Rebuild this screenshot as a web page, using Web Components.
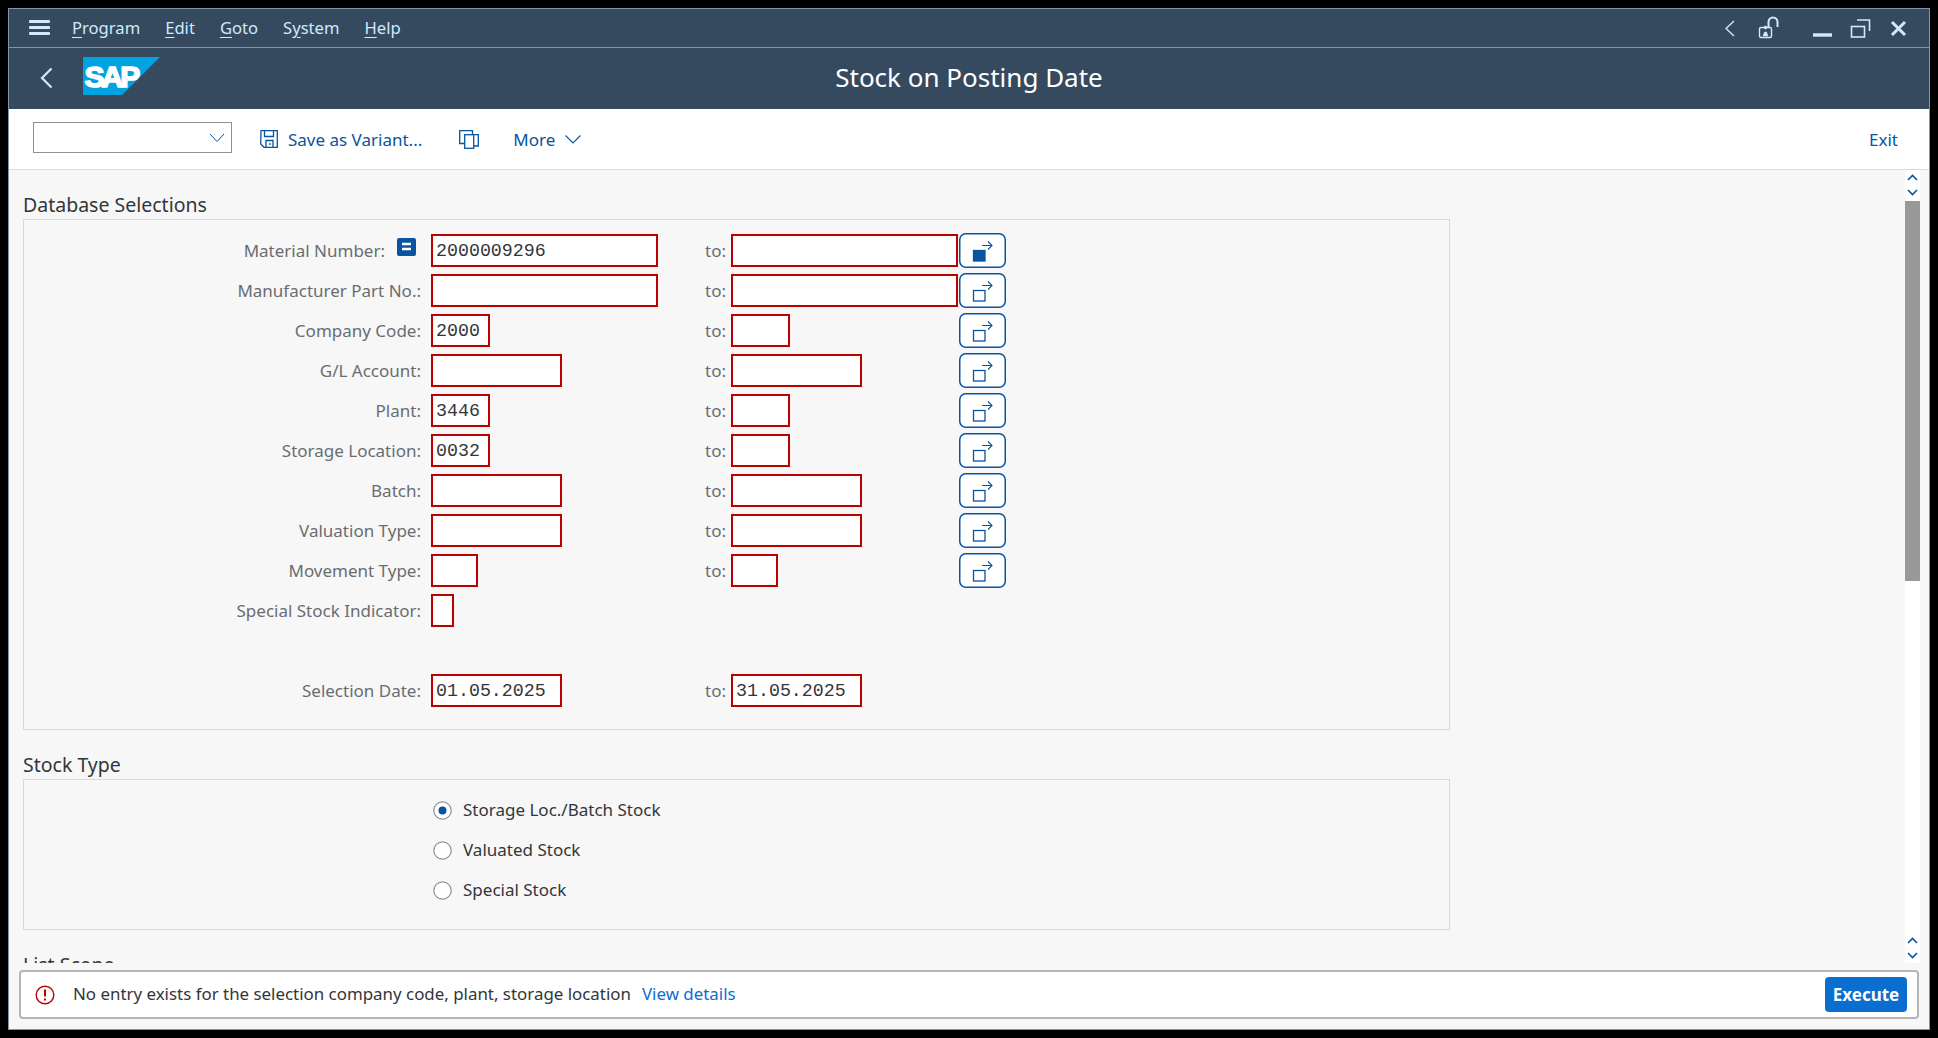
<!DOCTYPE html>
<html>
<head>
<meta charset="utf-8">
<title>Stock on Posting Date</title>
<style>
    html, body { margin: 0; height: 100%; background: #000; overflow: hidden; }
    body { font-family: "Noto Sans", "Liberation Sans", sans-serif; font-size: 17px; color: #32363a; }
</style>
</head>
<body>
<sap-window>
    <sap-menu-bar slot="head"></sap-menu-bar>
    <sap-title-bar slot="head" text="Stock on Posting Date"></sap-title-bar>
    <sap-tool-bar slot="head"></sap-tool-bar>

    <sap-group text="Database Selections">
        <sap-select-row label="Material Number:" marker value="2000009296" len="18" to-len="18" filled></sap-select-row>
        <sap-select-row label="Manufacturer Part No.:" len="18" to-len="18"></sap-select-row>
        <sap-select-row label="Company Code:" value="2000" len="4" to-len="4"></sap-select-row>
        <sap-select-row label="G/L Account:" len="10" to-len="10"></sap-select-row>
        <sap-select-row label="Plant:" value="3446" len="4" to-len="4"></sap-select-row>
        <sap-select-row label="Storage Location:" value="0032" len="4" to-len="4"></sap-select-row>
        <sap-select-row label="Batch:" len="10" to-len="10"></sap-select-row>
        <sap-select-row label="Valuation Type:" len="10" to-len="10"></sap-select-row>
        <sap-select-row label="Movement Type:" len="3" to-len="3"></sap-select-row>
        <sap-select-row label="Special Stock Indicator:" len="1" single></sap-select-row>
        <sap-select-row blank></sap-select-row>
        <sap-select-row label="Selection Date:" value="01.05.2025" to-value="31.05.2025" len="10" to-len="10" no-more></sap-select-row>
    </sap-group>

    <sap-group text="Stock Type">
        <sap-radio checked>Storage Loc./Batch Stock</sap-radio>
        <sap-radio>Valuated Stock</sap-radio>
        <sap-radio>Special Stock</sap-radio>
    </sap-group>

    <sap-group text="List Scope"></sap-group>

    <sap-message-bar slot="foot" text="No entry exists for the selection company code, plant, storage location"></sap-message-bar>
</sap-window>

<script>
const BLUE = '#0854a0';

class SapWindow extends HTMLElement {
    constructor() {
        super();
        this.attachShadow({ mode: 'open' }).innerHTML = `
        <style>
            :host { display: flex; flex-direction: column; box-sizing: border-box; margin: 8px; height: 1022px;
                    background: #f7f7f7; border: 1px solid #7f96ad; }
            #main { flex: 1; min-height: 0; display: flex; }
            #scroll { flex: 1; min-width: 0; overflow: hidden; padding: 23px 455px 0 14px; }
            sap-scroll-bar { margin-right: 9px; }
        </style>
        <slot name="head"></slot>
        <div id="main">
            <div id="scroll"><slot></slot></div>
            <sap-scroll-bar></sap-scroll-bar>
        </div>
        <slot name="foot"></slot>
        `;
    }
}
customElements.define('sap-window', SapWindow);

class SapMenuBar extends HTMLElement {
    constructor() {
        super();
        this.attachShadow({ mode: 'open' }).innerHTML = `
        <style>
            :host { display: flex; align-items: center; height: 38px; background: #354a5f; color: #d1e8ff;
                    border-bottom: 1px solid #7f96ad; font-size: 16.6px; }
            svg { display: block; flex: none; }
            #burger { margin-left: 20px; margin-right: 22px; }
            nav { display: flex; padding-bottom: 2px; }
            nav span { margin-right: 25px; }
            u { text-underline-offset: 3px; }
            #right { margin-left: auto; }
        </style>
        <svg id="burger" width="21" height="16" viewBox="0 0 21 16" fill="#d1e8ff">
            <rect x="0" y="0" width="21" height="3" rx="1"/><rect x="0" y="6" width="21" height="3" rx="1"/><rect x="0" y="12" width="21" height="3" rx="1"/>
        </svg>
        <nav>
            <span><u>P</u>rogram</span><span><u>E</u>dit</span><span><u>G</u>oto</span><span>S<u>y</u>stem</span><span><u>H</u>elp</span>
        </nav>
        <svg id="right" width="204" height="38" viewBox="1725 9 204 38" fill="none" stroke="#d1e8ff">
            <path d="M1734 21 L1726 28.5 L1734 36" stroke-width="1.4"/>
            <rect x="1759.5" y="27.5" width="12" height="10" rx="1.5" stroke-width="1.4"/>
            <path d="M1768.5 27 V22 a4.5 4.5 0 0 1 9 0 V27" stroke-width="2"/>
            <path d="M1765.5 29 a1.5 1.5 0 1 1 0.01 0 M1763 36 l1.5 -4 h2 l1.5 4 z" fill="#d1e8ff" stroke-width="0.6"/>
            <path d="M1813 35 H1832" stroke-width="3.4"/>
            <rect x="1851.5" y="26.5" width="13" height="10.5" stroke-width="1.6"/>
            <path d="M1857 20 H1869.5 V31" stroke-width="1.6"/>
            <path d="M1892 22 L1905 35 M1905 22 L1892 35" stroke-width="3"/>
        </svg>
        `;
    }
}
customElements.define('sap-menu-bar', SapMenuBar);

class SapTitleBar extends HTMLElement {
    constructor() {
        super();
        this.attachShadow({ mode: 'open' }).innerHTML = `
        <style>
            :host { display: block; position: relative; height: 61px; background: #354a5f; }
            #row { display: flex; align-items: center; height: 100%; }
            svg { display: block; flex: none; }
            #back { margin: 0 29px 2px 31px; }
            #logo { margin-bottom: 5px; }
            h1 { margin: 0; position: absolute; left: 0; right: 0; top: 0; line-height: 59px; text-align: center;
                 font-size: 26px; font-weight: 400; color: #fff; }
            text { font-family: "Liberation Sans", sans-serif; font-weight: 700; }
        </style>
        <div id="row">
            <svg id="back" width="14" height="22" viewBox="0 0 14 22" fill="none" stroke="#d1e8ff" stroke-width="2.2">
                <path d="M11.5 1.5 L2 11 L11.5 20.5"/>
            </svg>
            <svg id="logo" width="78" height="38" viewBox="0 0 78 38">
                <path d="M0 0 H77 L39 38 H0 Z" fill="#00a3e0"/>
                <text x="1.5" y="30" font-size="30" fill="#fff" stroke="#fff" stroke-width="1.6" letter-spacing="-3">SAP</text>
            </svg>
        </div>
        <h1>${this.getAttribute('text')}</h1>
        `;
    }
}
customElements.define('sap-title-bar', SapTitleBar);

class SapToolBar extends HTMLElement {
    constructor() {
        super();
        this.attachShadow({ mode: 'open' }).innerHTML = `
        <style>
            :host { display: flex; align-items: center; height: 60px; background: #fff; color: ${BLUE};
                    border-bottom: 1px solid #d9d9d9; padding: 0 31px 0 24px; }
            svg { display: block; flex: none; }
            #combo { width: 191px; height: 29px; border: 1px solid #89919a; background: #fff; display: flex; align-items: center;
                     justify-content: flex-end; padding-right: 6px; margin-bottom: 3px; }
            #save { margin-left: 28px; margin-right: 10px; }
            #copy { margin-left: 37px; margin-right: 34px; }
            #more { margin-left: 10px; }
            #exit { margin-left: auto; }
        </style>
        <div id="combo">
            <svg width="16" height="10" viewBox="0 0 16 10" fill="none" stroke="${BLUE}" stroke-width="1"><path d="M1 1 L8 8.5 L15 1"/></svg>
        </div>
        <svg id="save" width="18" height="18" viewBox="0 0 18 18" fill="none" stroke="${BLUE}" stroke-width="1.3">
            <path d="M1 .7 H17.3 V17.3 H4 L.7 14 Z"/><path d="M4.5 1 V6.5 H13.5 V1"/><path d="M6 17 V10.5 H13 V17 M10 13 V15"/>
        </svg>
        <span>Save as Variant...</span>
        <svg id="copy" width="20" height="19" viewBox="0 0 20 19" fill="none" stroke="${BLUE}" stroke-width="1.3">
            <path d="M5 13.5 H.7 V.7 H13.5 V4"/><rect x="5.7" y="4.7" width="9" height="13.6"/><path d="M15 4.7 H19.3 V16 H15"/>
        </svg>
        <span>More</span>
        <svg id="more" width="16" height="9" viewBox="0 0 16 9" fill="none" stroke="${BLUE}" stroke-width="1.1"><path d="M.5 .5 L8 8 L15.5 .5"/></svg>
        <span id="exit">Exit</span>
        `;
    }
}
customElements.define('sap-tool-bar', SapToolBar);

class SapGroup extends HTMLElement {
    constructor() {
        super();
        this.attachShadow({ mode: 'open' }).innerHTML = `
        <style>
            :host { display: block; margin-bottom: 23px; }
            h2 { margin: 0 0 2px; font-size: 19.5px; font-weight: 400; line-height: 24px; color: #32363a; }
            #box { border: 1px solid #d9d9d9; padding: 13px 0 21px; display: flex; flex-direction: column; gap: 5px; }
        </style>
        <h2>${this.getAttribute('text')}</h2>
        <div id="box"><slot></slot></div>
        `;
    }
}
customElements.define('sap-group', SapGroup);

class SapInput extends HTMLElement {
    constructor() {
        super();
        // one character is 12px wide, plus 11px for border and padding
        var len = Number(this.getAttribute('len'));
        var value = this.getAttribute('value') || '';
        this.attachShadow({ mode: 'open' }).innerHTML = `
        <style>
            :host { display: block; box-sizing: border-box; width: ${len * 12 + 11}px; height: 33px;
                    border: 2px solid #bb0000; background: #fff; padding-left: 3px;
                    font: 18.3px/31px "Liberation Mono", monospace; color: #32363a; }
        </style>
        ${value}
        `;
    }
}
customElements.define('sap-input', SapInput);

class SapSelectRow extends HTMLElement {
    constructor() {
        super();
        var label = this.getAttribute('label') || '';
        var single = this.hasAttribute('single');
        var noMore = this.hasAttribute('no-more');
        var filled = this.hasAttribute('filled');
        var val = this.getAttribute('value') || '';
        var toVal = this.getAttribute('to-value') || '';
        var marker = this.hasAttribute('marker') ? `
            <svg id="marker" width="19" height="18" viewBox="0 0 19 18">
                <rect width="19" height="18" rx="2" fill="${BLUE}"/><path d="M5 6 H14 M5 11 H14" stroke="#fff" stroke-width="2.4"/>
            </svg>` : '';
        var inner = this.hasAttribute('blank') ? '' : `
            <div id="label">${label}${marker}</div>
            <sap-input len="${this.getAttribute('len')}" value="${val}"></sap-input>
            ${single ? '' : `
            <div id="to">to:</div>
            <div id="toCell"><sap-input len="${this.getAttribute('to-len')}" value="${toVal}"></sap-input></div>`}
            ${single || noMore ? '' : `
            <svg id="more" width="47" height="35" viewBox="0 0 47 35" fill="none" stroke="${BLUE}">
                <rect x=".75" y=".75" width="45.5" height="33.5" rx="6" fill="#fff" stroke-width="1.5"/>
                <rect x="14.5" y="17.5" width="11.5" height="10.5" stroke-width="1.3" fill="${filled ? BLUE : 'none'}"/>
                <path d="M23 12.5 H33 M29 8.5 L33 12.5 L29 16.5" stroke-width="1.1"/>
            </svg>`}`;
        this.attachShadow({ mode: 'open' }).innerHTML = `
        <style>
            :host { display: grid; grid-template-columns: 397px 284px 26px 228px 47px; align-items: center; height: 35px; }
            #label { display: flex; align-items: center; justify-content: flex-end; color: #6a6d70; position: relative; }
            #marker { position: absolute; right: 5px; top: -1px; }
            #label { ${this.hasAttribute('marker') ? 'padding-right: 36px;' : ''} }
            sap-input { margin-left: 10px; }
            #to { color: #6a6d70; }
            #toCell sap-input { margin-left: 0; }
            #more { grid-column: 5; display: block; }
        </style>
        ${inner}
        `;
    }
}
customElements.define('sap-select-row', SapSelectRow);

class SapRadio extends HTMLElement {
    constructor() {
        super();
        this.attachShadow({ mode: 'open' }).innerHTML = `
        <style>
            :host { display: flex; align-items: center; gap: 11px; height: 35px; padding-left: 409px; color: #32363a; }
            svg { display: block; flex: none; }
            span { padding-bottom: 2px; }
        </style>
        <svg width="19" height="19" viewBox="0 0 19 19">
            <circle cx="9.5" cy="9.5" r="8.7" fill="#fff" stroke="#89919a" stroke-width="1.2"/>
            ${this.hasAttribute('checked') ? `<circle cx="9.5" cy="9.5" r="4" fill="${BLUE}"/>` : ''}
        </svg>
        <span><slot></slot></span>
        `;
    }
}
customElements.define('sap-radio', SapRadio);

class SapScrollBar extends HTMLElement {
    constructor() {
        super();
        var up = `<svg width="15" height="15" viewBox="0 0 15 15" fill="none" stroke="${BLUE}" stroke-width="1.6"><path d="M3 10 L7.5 5.5 L12 10"/></svg>`;
        var down = `<svg width="15" height="15" viewBox="0 0 15 15" fill="none" stroke="${BLUE}" stroke-width="1.6"><path d="M3 5 L7.5 9.5 L12 5"/></svg>`;
        this.attachShadow({ mode: 'open' }).innerHTML = `
        <style>
            :host { display: flex; flex-direction: column; flex: none; width: 15px; background: #fff; }
            svg { display: block; flex: none; }
            #top { height: 31px; }
            #thumb { height: 380px; background: #999; flex: none; }
            #rest { flex: 1; }
            #bottom { height: 30px; }
        </style>
        <div id="top">${up}${down}</div>
        <div id="thumb"></div>
        <div id="rest"></div>
        <div id="bottom">${up}${down}</div>
        `;
    }
}
customElements.define('sap-scroll-bar', SapScrollBar);

class SapMessageBar extends HTMLElement {
    constructor() {
        super();
        this.attachShadow({ mode: 'open' }).innerHTML = `
        <style>
            :host { display: flex; align-items: center; box-sizing: border-box; height: 49px; margin: 7px 10px 10px 10px;
                    background: #fff; border: 2px solid #b5b5b5; border-radius: 4px; padding: 0 10px 0 14px; color: #32363a; font-size: 16.9px; }
            svg { display: block; flex: none; margin-right: 18px; }
            span, a { padding-bottom: 2px; }
            a { color: #0a6ed1; margin-left: 11px; }
            button { margin-left: auto; width: 82px; height: 35px; border: 0; border-radius: 4px; background: #0a6ed1; color: #fff;
                     font: 700 17px "Noto Sans", "Liberation Sans", sans-serif; padding: 0; }
        </style>
        <svg width="20" height="20" viewBox="0 0 20 20" fill="none" stroke="#bb0000">
            <circle cx="10" cy="10" r="8.8" stroke-width="1.4"/>
            <path d="M10 4.5 V11.5" stroke-width="2"/><path d="M10 13.5 V15.5" stroke-width="2"/>
        </svg>
        <span>${this.getAttribute('text')}</span>
        <a>View details</a>
        <button>Execute</button>
        `;
    }
}
customElements.define('sap-message-bar', SapMessageBar);
</script>
</body>
</html>
